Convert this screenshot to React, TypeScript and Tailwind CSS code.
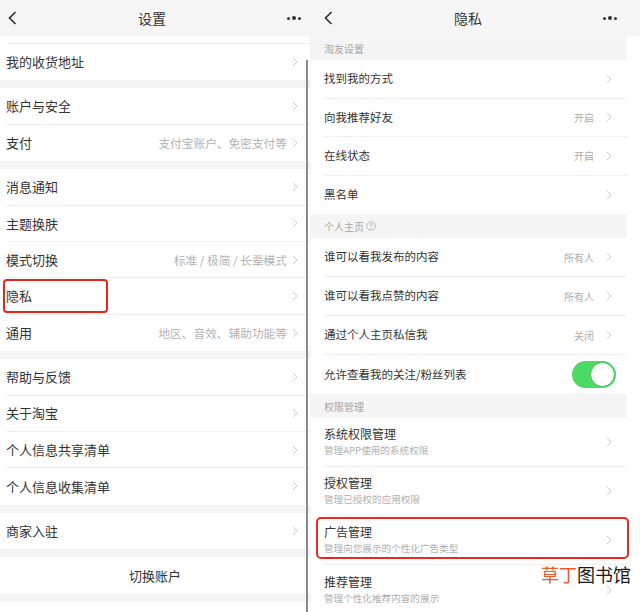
import React from "react";

const FONT = "font-['Noto_Sans_CJK_SC','Liberation_Sans',sans-serif]";

type Row = { t: string; s?: string };

const LEFT: Row[][] = [
  [{ t: "我的收货地址" }],
  [{ t: "账户与安全" }, { t: "支付", s: "支付宝账户、免密支付等" }],
  [
    { t: "消息通知" },
    { t: "主题换肤" },
    { t: "模式切换", s: "标准 / 极简 / 长辈模式" },
    { t: "隐私" },
    { t: "通用", s: "地区、音效、辅助功能等" },
  ],
  [{ t: "帮助与反馈" }, { t: "关于淘宝" }, { t: "个人信息共享清单" }, { t: "个人信息收集清单" }],
  [{ t: "商家入驻" }],
];

function Chevron({ className = "" }: { className?: string }) {
  return (
    <svg width="6" height="10" viewBox="0 0 6 10" className={className}>
      <polyline points="1,1 5,5 1,9" fill="none" stroke="#cdcdcd" strokeWidth="1" />
    </svg>
  );
}

function Header({ title, pad }: { title: string; pad: string }) {
  return (
    <div className={`h-[36px] bg-[#f6f6f6] flex items-center justify-between ${pad}`}>
      <svg width="9" height="14" viewBox="0 0 9 14">
        <polyline points="7.5,1 1.5,7 7.5,13" fill="none" stroke="#333" strokeWidth="1.7" />
      </svg>
      <div className="text-[14px] text-[#333]">{title}</div>
      <div className="flex items-center gap-[2px]">
        <span className="w-[3px] h-[3px] rounded-full bg-[#333]" />
        <span className="w-[4px] h-[4px] rounded-full bg-[#333]" />
        <span className="w-[3px] h-[3px] rounded-full bg-[#333]" />
      </div>
    </div>
  );
}

function LeftPanel() {
  return (
    <div className="w-[310px] flex flex-col bg-[#f4f4f4] relative">
      <Header title="设置" pad="pl-[8px] pr-[9px]" />
      <div className="bg-white pl-[8px]">
        <div className="h-[8px] border-b border-[#f0f0f0]" />
      </div>
      {LEFT.map((g, gi) => (
        <div key={gi} className="bg-white pl-[6px] mb-[8px]">
          {g.map((r, i) => (
            <div
              key={r.t}
              className={`h-[36.4px] flex items-center justify-between pr-[12px] ${
                i < g.length - 1 ? "border-b border-[#f0f0f0]" : ""
              }`}
            >
              <span className="text-[13px] text-[#333]">{r.t}</span>
              <div className="flex items-center gap-[5px]">
                {r.s && <span className="text-[11.7px] text-[#b3b3b3]">{r.s}</span>}
                <Chevron />
              </div>
            </div>
          ))}
        </div>
      ))}
      <div className="bg-white h-[37px] flex items-center justify-center text-[13px] text-[#333]">
        切换账户
      </div>
      <div className="h-[8px]" />
      <div className="flex-1 bg-white" />
      <div className="absolute left-[306px] top-[60px] bottom-0 w-[2px] bg-[#8a8a8a]" />
      <div className="absolute left-[3px] top-[279px] w-[105px] h-[34px] border-2 border-[#e8251c] rounded-[4px]" />
    </div>
  );
}

function Section({ t, help }: { t: string; help?: boolean }) {
  return (
    <div className="h-[24px] bg-[#f5f5f5] flex items-center pl-[13px] text-[10px] text-[#a6a6a6] gap-[2px]">
      {t}
      {help && (
        <svg width="10" height="10" viewBox="0 0 10 10">
          <circle cx="5" cy="5" r="4.3" fill="none" stroke="#aaa" strokeWidth="0.8" />
          <path d="M3.6 3.9 Q3.7 2.6 5 2.6 Q6.3 2.6 6.3 3.7 Q6.3 4.5 5 5 L5 6" fill="none" stroke="#aaa" strokeWidth="0.8" />
          <circle cx="5" cy="7.3" r="0.5" fill="#aaa" />
        </svg>
      )}
    </div>
  );
}

function RRow({ t, s, h, last, toggle }: { t: string; s?: string; h: string; last?: boolean; toggle?: boolean }) {
  return (
    <div className="bg-white pl-[13px]">
      <div className={`${h} flex items-center justify-between pr-[15px] ${last ? "" : "border-b border-[#f0f0f0]"}`}>
        <span className="text-[11.5px] text-[#333]">{t}</span>
        {toggle ? (
          <div className="w-[44px] h-[27px] rounded-full bg-[#4cd964] flex items-center justify-end pr-[1px] -mr-[4px]">
            <div className="w-[25px] h-[25px] rounded-full bg-white border border-[#3fb856]" />
          </div>
        ) : (
          <div className="flex items-center gap-[12px]">
            {s && <span className="text-[10px] text-[#adadad]">{s}</span>}
            <Chevron />
          </div>
        )}
      </div>
    </div>
  );
}

function Row2({ t, s, last }: { t: string; s: string; last?: boolean }) {
  return (
    <div className="bg-white pl-[13px]">
      <div className={`h-[49px] flex items-center justify-between pr-[15px] ${last ? "" : "border-b border-[#f0f0f0]"}`}>
        <div className="flex flex-col leading-none gap-[6px]">
          <span className="text-[12px] text-[#333]">{t}</span>
          <span className="text-[9.6px] text-[#b0b0b0]">{s}</span>
        </div>
        <Chevron />
      </div>
    </div>
  );
}

function RightPanel() {
  return (
    <div className="flex-1 flex flex-col bg-white relative">
      <div className="bg-[#f6f6f6] pr-[14px]">
        <Header title="隐私" pad="pl-[13px] pr-[9px]" />
      </div>
      <div className="w-[316px] flex flex-col">
        <Section t="淘友设置" />
        <RRow t="找到我的方式" h="h-[38.5px]" />
        <RRow t="向我推荐好友" s="开启" h="h-[38.5px]" />
        <RRow t="在线状态" s="开启" h="h-[38.5px]" />
        <RRow t="黑名单" h="h-[38.5px]" last />
        <Section t="个人主页" help />
        <RRow t="谁可以看我发布的内容" s="所有人" h="h-[39px]" />
        <RRow t="谁可以看我点赞的内容" s="所有人" h="h-[39px]" />
        <RRow t="通过个人主页私信我" s="关闭" h="h-[39px]" />
        <RRow t="允许查看我的关注/粉丝列表" h="h-[39px]" last toggle />
        <Section t="权限管理" />
        <Row2 t="系统权限管理" s="管理APP使用的系统权限" />
        <Row2 t="授权管理" s="管理已授权的应用权限" />
        <Row2 t="广告管理" s="管理向您展示的个性化广告类型" />
        <Row2 t="推荐管理" s="管理个性化推荐内容的展示" last />
      </div>
      <div className="absolute left-[5px] top-[517px] w-[313px] h-[42px] border-2 border-[#ea2a1f] rounded-[5px]" />
      <div className="absolute left-[230px] top-[565px] text-[18px] leading-none tracking-[0px]">
        <span className="text-[#f0582a]">草丁</span>
        <span className="text-[#1a1a1a]">图书馆</span>
      </div>
    </div>
  );
}

export default function App() {
  return (
    <div className={`w-[640px] h-[612px] flex overflow-hidden bg-white ${FONT}`}>
      <LeftPanel />
      <div className="w-px bg-[#f4f4f4]" />
      <RightPanel />
    </div>
  );
}
